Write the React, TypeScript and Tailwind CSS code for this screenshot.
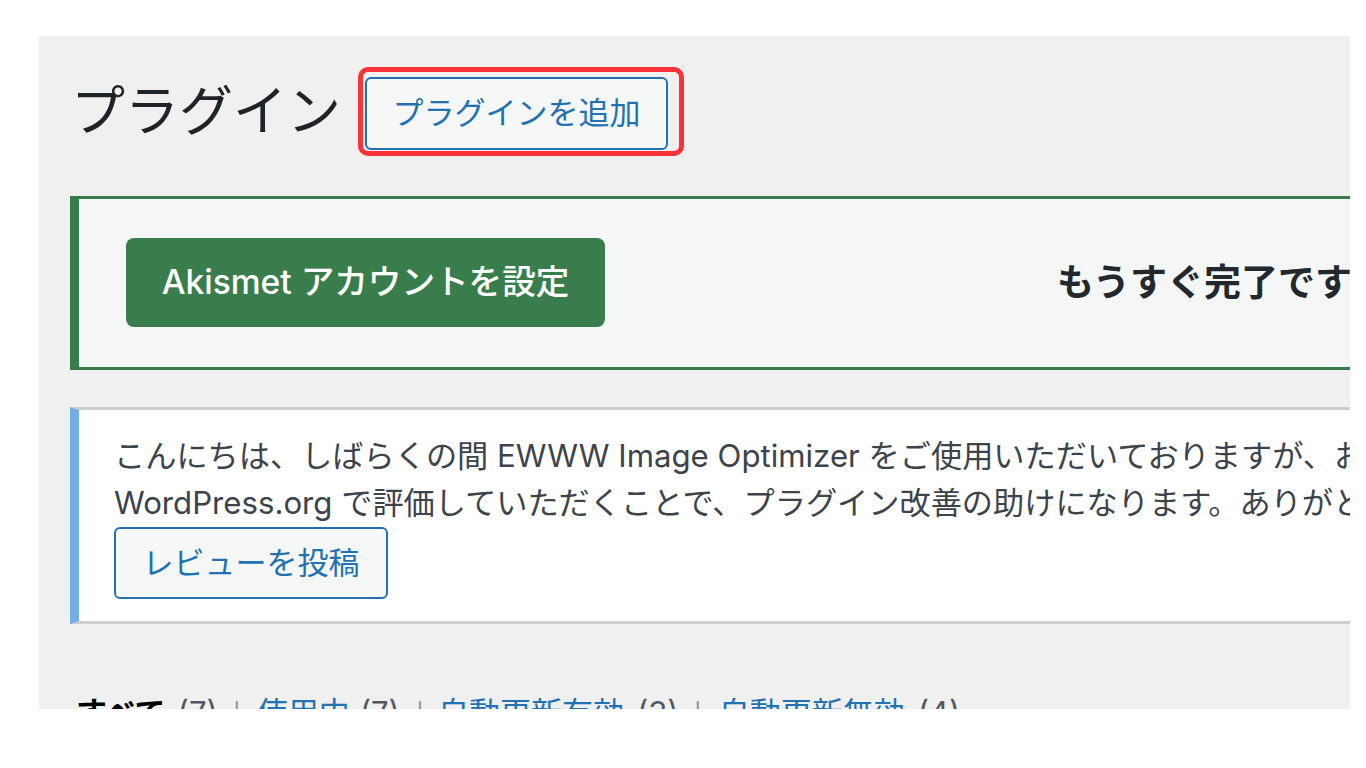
const font = "font-['Inter','Noto_Sans_CJK_JP',sans-serif]";

export default function App() {
  return (
    <div className={`h-[768px] w-[1366px] overflow-hidden bg-white pl-[39px] pt-[36px] ${font}`}>
      <div className="h-[673px] w-[1311px] overflow-hidden bg-[#f0f0f1] pl-[31px]">
        {/* heading */}
        <div className="flex h-[160px] items-start">
          <h1 className="ml-px mt-[41px] whitespace-nowrap text-[54px] leading-[70px] font-normal text-[#1d2327]">
            プラグイン
          </h1>
          <div className="ml-[17px] mt-[31px] rounded-[10px] border-[5px] border-[#fb3237] pb-px pl-[2px] pr-[11px] pt-[5px]">
            <button className="flex h-[73px] w-[303px] items-center justify-center rounded-[6px] border-2 border-[#2271b1] bg-[#f6f7f7] text-[31px] text-[#2271b1]">
              プラグインを追加
            </button>
          </div>
        </div>

        {/* akismet notice */}
        <div className="flex h-[174px] w-[1400px] items-center border-y-[3px] border-l-[9px] border-[#377d4b] bg-[#f5f7f7] pl-[47px]">
          <button className="mt-[-2px] flex h-[89px] w-[479px] shrink-0 items-center justify-center whitespace-nowrap rounded-[8px] bg-[#3a7d4c] text-[33.6px] font-medium text-white">
            Akismet アカウントを設定
          </button>
          <p className="ml-[452px] whitespace-nowrap text-[37px] leading-[44px] font-bold text-[#23282d]">
            もうすぐ完了です - Akismet
          </p>
        </div>

        {/* review notice */}
        <div className="mt-[37px] h-[217px] w-[1400px] border-y-[3px] border-l-[9px] border-y-[#cdcdd2] border-l-[#72aee6] bg-white pl-[35px] pt-[23px]">
          <p className="whitespace-nowrap text-[31.2px] leading-[47px] text-[#3c434a]">
            こんにちは、しばらくの間 EWWW Image Optimizer をご使用いただいておりますが、お楽しみいただけていますか。
            <br />
            WordPress.org で評価していただくことで、プラグイン改善の助けになります。ありがとうございます。
          </p>
          <button className="flex h-[72px] w-[274px] items-center justify-center rounded-[6px] border-2 border-[#2271b1] bg-[#f6f7f7] text-[31px] text-[#2271b1]">
            レビューを投稿
          </button>
        </div>

        {/* status filter */}
        <p className="ml-[6px] mt-[69px] whitespace-nowrap text-[31px] leading-[40px] text-[#50575e]">
          <b className="font-bold text-black">すべて</b>
          <span className="ml-[12px]">(7)</span>
          <span className="ml-[15px] text-[24px] text-[#8c8f94]">|</span>
          <span className="ml-[16px] text-[#2271b1]">使用中</span>
          <span className="ml-[10px]">(7)</span>
          <span className="ml-[16px] text-[24px] text-[#8c8f94]">|</span>
          <span className="ml-[14px] text-[#2271b1]">自動更新有効</span>
          <span className="ml-[13px]">(3)</span>
          <span className="ml-[15px] text-[24px] text-[#8c8f94]">|</span>
          <span className="ml-[17px] text-[#2271b1]">自動更新無効</span>
          <span className="ml-[13px]">(4)</span>
        </p>
      </div>
    </div>
  );
}
